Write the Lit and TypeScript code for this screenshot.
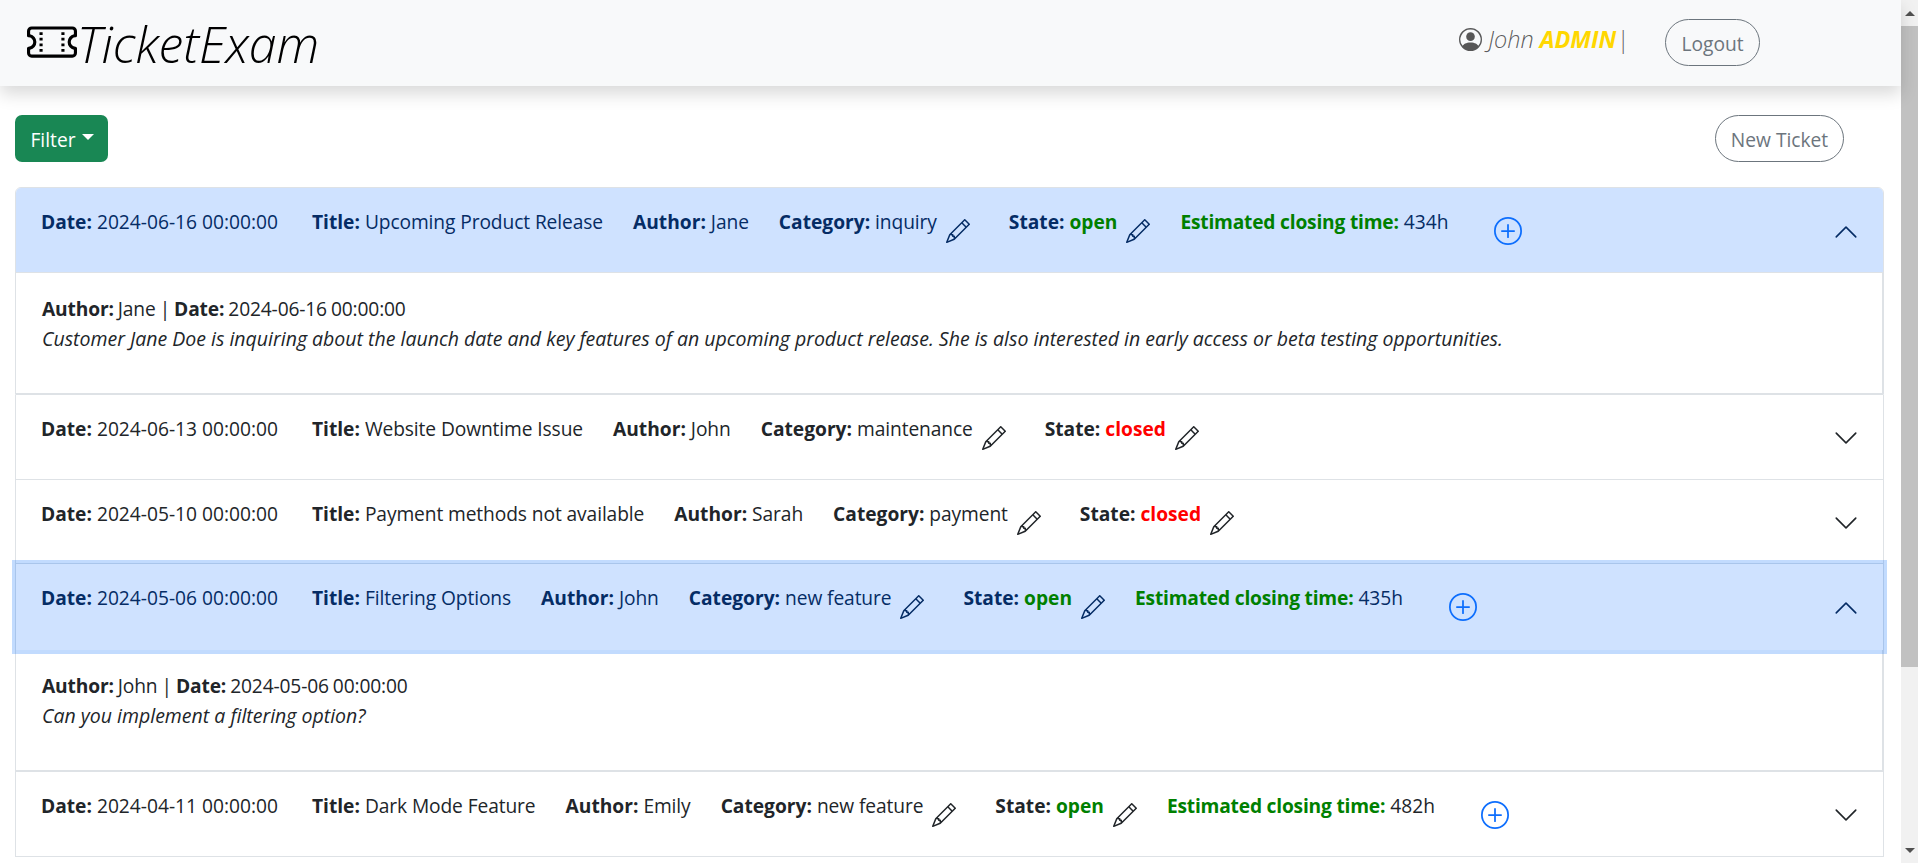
import { LitElement, html, css, svg } from 'lit'
import { customElement } from 'lit/decorators.js'

interface Ticket {
  date: string
  title: string
  author: string
  category: string
  state: 'open' | 'closed'
  eta?: string
  body?: string
  focused?: boolean
}

const tickets: Ticket[] = [
  {
    date: '2024-06-16 00:00:00',
    title: 'Upcoming Product Release',
    author: 'Jane',
    category: 'inquiry',
    state: 'open',
    eta: '434h',
    body: 'Customer Jane Doe is inquiring about the launch date and key features of an upcoming product release. She is also interested in early access or beta testing opportunities.',
  },
  { date: '2024-06-13 00:00:00', title: 'Website Downtime Issue', author: 'John', category: 'maintenance', state: 'closed' },
  { date: '2024-05-10 00:00:00', title: 'Payment methods not available', author: 'Sarah', category: 'payment', state: 'closed' },
  {
    date: '2024-05-06 00:00:00',
    title: 'Filtering Options',
    author: 'John',
    category: 'new feature',
    state: 'open',
    eta: '435h',
    body: 'Can you implement a filtering option?',
    focused: true,
  },
  { date: '2024-04-11 00:00:00', title: 'Dark Mode Feature', author: 'Emily', category: 'new feature', state: 'open', eta: '482h' },
]

const pencil = svg`<path d="M12.146.146a.5.5 0 0 1 .708 0l3 3a.5.5 0 0 1 0 .708l-10 10a.5.5 0 0 1-.168.11l-5 2a.5.5 0 0 1-.65-.65l2-5a.5.5 0 0 1 .11-.168l10-10zM11.207 2.5 13.5 4.793 14.793 3.5 12.5 1.207 11.207 2.5zm1.586 3L10.5 3.207 4 9.707V10h.5a.5.5 0 0 1 .5.5v.5h.5a.5.5 0 0 1 .5.5v.5h.293l6.5-6.5zm-9.761 5.175-.106.106-1.528 3.821 3.821-1.528.106-.106A.5.5 0 0 1 5 12.5V12h-.5a.5.5 0 0 1-.5-.5V11h-.5a.5.5 0 0 1-.468-.325z"/>`
const plus = svg`<path d="M8 15A7 7 0 1 1 8 1a7 7 0 0 1 0 14zm0 1A8 8 0 1 0 8 0a8 8 0 0 0 0 16z"/><path d="M8 4a.5.5 0 0 1 .5.5v3h3a.5.5 0 0 1 0 1h-3v3a.5.5 0 0 1-1 0v-3h-3a.5.5 0 0 1 0-1h3v-3A.5.5 0 0 1 8 4z"/>`
const chevron = svg`<path fill-rule="evenodd" d="M1.646 4.646a.5.5 0 0 1 .708 0L8 10.293l5.646-5.647a.5.5 0 0 1 .708.708l-6 6a.5.5 0 0 1-.708 0l-6-6a.5.5 0 0 1 0-.708z"/>`
const ticket = svg`<path d="M4 4.85v.9h1v-.9H4Zm7 0v.9h1v-.9h-1Zm-7 1.8v.9h1v-.9H4Zm7 0v.9h1v-.9h-1Zm-7 1.8v.9h1v-.9H4Zm7 0v.9h1v-.9h-1Zm-7 1.8v.9h1v-.9H4Zm7 0v.9h1v-.9h-1Z"/><path d="M1.5 3A1.5 1.5 0 0 0 0 4.5V6a.5.5 0 0 0 .5.5 1.5 1.5 0 1 1 0 3 .5.5 0 0 0-.5.5v1.5A1.5 1.5 0 0 0 1.5 13h13a1.5 1.5 0 0 0 1.5-1.5V10a.5.5 0 0 0-.5-.5 1.5 1.5 0 0 1 0-3A.5.5 0 0 0 16 6V4.5A1.5 1.5 0 0 0 14.5 3h-13ZM1 4.5a.5.5 0 0 1 .5-.5h13a.5.5 0 0 1 .5.5v1.05a2.5 2.5 0 0 0 0 4.9v1.05a.5.5 0 0 1-.5.5h-13a.5.5 0 0 1-.5-.5v-1.05a2.5 2.5 0 0 0 0-4.9V4.5Z"/>`
const person = svg`<path d="M11 6a3 3 0 1 1-6 0 3 3 0 0 1 6 0z"/><path fill-rule="evenodd" d="M0 8a8 8 0 1 1 16 0A8 8 0 0 1 0 8zm8-7a7 7 0 0 0-5.468 11.37C3.242 11.226 4.805 10 8 10s4.757 1.225 5.468 2.37A7 7 0 0 0 8 1z"/>`

@customElement('app-root')
export class AppRoot extends LitElement {
  static styles = css`
    :host {
      display: flex;
      height: 863px;
      overflow: hidden;
      background: white;
      color: #212529;
      font-family: 'Open Sans', 'Noto Sans', sans-serif;
      font-size: 19.2px;
      line-height: 30px;
    }

    svg {
      display: block;
      fill: currentColor;
      flex: none;
    }

    .page {
      flex: 1;
      min-width: 0;
    }

    .scrollbar {
      width: 17px;
      flex: none;
      background: #f1f1f1;
      display: flex;
      flex-direction: column;
      align-items: center;
    }

    .scroll-btn {
      height: 26px;
      width: 100%;
      display: flex;
      align-items: center;
      justify-content: center;
      flex: none;
    }

    .scroll-up {
      border-left: 5px solid transparent;
      border-right: 5px solid transparent;
      border-bottom: 5px solid #505050;
    }

    .scroll-down {
      border-left: 5px solid transparent;
      border-right: 5px solid transparent;
      border-top: 5px solid #505050;
    }

    .thumb {
      width: 100%;
      height: 641px;
      background: #c1c1c1;
    }

    .track {
      flex: 1;
    }

    .navbar {
      height: 86px;
      box-sizing: border-box;
      background: #f8f9fa;
      box-shadow: 0 8px 16px rgba(0, 0, 0, 0.15);
      display: flex;
      align-items: center;
      padding: 0 141px 2px 27px;
      position: relative;
    }

    .brand {
      display: flex;
      align-items: center;
      font-size: 50px;
      font-weight: 300;
      font-style: italic;
      line-height: 60px;
      color: black;
    }

    .brand span {
      margin-top: 3px;
    }

    .user {
      margin-left: auto;
      display: flex;
      align-items: center;
      gap: 6px;
      font-size: 23.5px;
      font-style: italic;
      font-weight: 300;
      color: rgba(0, 0, 0, 0.65);
      margin-top: -6px;
    }

    .role {
      color: gold;
      font-weight: 700;
    }

    .sep {
      margin-left: -6px;
    }

    .pill {
      height: 47px;
      box-sizing: border-box;
      border: 1px solid #6c757d;
      border-radius: 24px;
      color: #6c757d;
      background: transparent;
      font: inherit;
      display: flex;
      align-items: center;
      justify-content: center;
      padding: 2px 0 0;
    }

    .logout {
      width: 95px;
      margin-left: 36px;
      padding-top: 4px;
    }

    .new-ticket {
      width: 129px;
    }

    .toolbar {
      display: flex;
      justify-content: space-between;
      padding: 29px 57px 25px 15px;
    }

    .filter {
      height: 47px;
      width: 93px;
      box-sizing: border-box;
      background: #198754;
      color: white;
      border: none;
      border-radius: 7px;
      font: inherit;
      display: flex;
      align-items: center;
      justify-content: center;
      gap: 6px;
      padding: 2px 0 0 1px;
    }

    .caret {
      border-left: 6px solid transparent;
      border-right: 6px solid transparent;
      border-top: 6px solid white;
      margin-top: -5px;
    }

    .accordion {
      margin: 0 17px 0 15px;
    }

    .item {
      border: 1px solid #dee2e6;
      border-top: none;
    }

    .item:first-child {
      border-top: 1px solid #dee2e6;
      border-radius: 6px 6px 0 0;
    }

    .head {
      height: 84px;
      box-sizing: border-box;
      padding: 19px 24px 0 25px;
      display: flex;
      align-items: flex-start;
    }

    .item:first-child .head {
      height: 85px;
      border-radius: 5px 5px 0 0;
    }

    .item:nth-child(3) .head {
      height: 83px;
    }

    .item.open .head {
      background: #cfe2ff;
      color: #052c65;
      box-shadow: inset 0 -1px 0 #dee2e6;
    }

    .item.focused .head {
      height: 86px;
      box-shadow: 0 0 0 4px rgba(13, 110, 253, 0.25);
      position: relative;
    }

    .field {
      margin-right: 30px;
      white-space: nowrap;
    }

    .field:first-child {
      margin-right: 34px;
    }

    .field b {
      font-weight: 700;
    }

    .field.tight {
      margin-right: 9px;
    }

    .value {
      letter-spacing: -0.1px;
    }

    .pencil {
      margin: 12px 39px 0 0;
    }

    .pencil.last {
      margin-right: 30px;
    }

    .open-state {
      color: green;
      font-weight: 700;
    }

    .closed-state {
      color: red;
      font-weight: 700;
    }

    .eta b {
      color: green;
      letter-spacing: -0.2px;
    }

    .add {
      margin: 10px 0 0 16px;
      color: #0d6efd;
    }

    .chevron {
      margin-left: auto;
      align-self: center;
      margin-top: -17px;
    }

    .body {
      height: 121px;
      box-sizing: border-box;
      padding: 21px 25px 0 26px;
      border-bottom: 1px solid #dee2e6;
      border-right: 1px solid #dee2e6;
    }

    .meta {
      letter-spacing: -0.15px;
      word-spacing: -0.8px;
    }

    .body i {
      display: block;
      font-size: 19.5px;
    }
  `

  renderTicket(t: Ticket) {
    const isOpen = !!t.body
    return html`
      <div class="item ${isOpen ? 'open' : ''} ${t.focused ? 'focused' : ''}">
        <div class="head">
          <span class="field"><b>Date:</b> ${t.date}</span>
          <span class="field"><b>Title:</b> <span class="value">${t.title}</span></span>
          <span class="field"><b>Author:</b> <span class="value">${t.author}</span></span>
          <span class="field tight"><b>Category:</b> <span class="value">${t.category}</span></span>
          <svg class="pencil" width="24" height="24" viewBox="0 0 16 16">${pencil}</svg>
          <span class="field tight"><b>State:</b> <span class="${t.state}-state">${t.state}</span></span>
          <svg class="pencil last" width="24" height="24" viewBox="0 0 16 16">${pencil}</svg>
          ${t.eta
            ? html`<span class="field eta"><b>Estimated closing time:</b> ${t.eta}</span>
                <svg class="add" width="28" height="28" viewBox="0 0 16 16">${plus}</svg>`
            : ''}
          <svg class="chevron" width="26" height="26" viewBox="0 0 16 16" style="transform: rotate(${isOpen ? 180 : 0}deg)">${chevron}</svg>
        </div>
        ${isOpen
          ? html`<div class="body">
              <div class="meta"><b>Author:</b> ${t.author} | <b>Date:</b> ${t.date}</div>
              <i>${t.body}</i>
            </div>`
          : ''}
      </div>
    `
  }

  render() {
    return html`
      <div class="page">
        <nav class="navbar">
          <div class="brand">
            <svg width="50" height="50" viewBox="0 0 16 16">${ticket}</svg>
            <span>TicketExam</span>
          </div>
          <div class="user">
            <svg width="23" height="23" viewBox="0 0 16 16">${person}</svg>
            <span>John</span>
            <span class="role">ADMIN</span>
            <span class="sep">|</span>
          </div>
          <button class="pill logout">Logout</button>
        </nav>
        <div class="toolbar">
          <button class="filter">Filter <span class="caret"></span></button>
          <button class="pill new-ticket">New Ticket</button>
        </div>
        <div class="accordion">${tickets.map((t) => this.renderTicket(t))}</div>
      </div>
      <div class="scrollbar">
        <div class="scroll-btn"><span class="scroll-up"></span></div>
        <div class="thumb"></div>
        <div class="track"></div>
        <div class="scroll-btn"><span class="scroll-down"></span></div>
      </div>
    `
  }
}

declare global {
  interface HTMLElementTagNameMap {
    'app-root': AppRoot
  }
}
